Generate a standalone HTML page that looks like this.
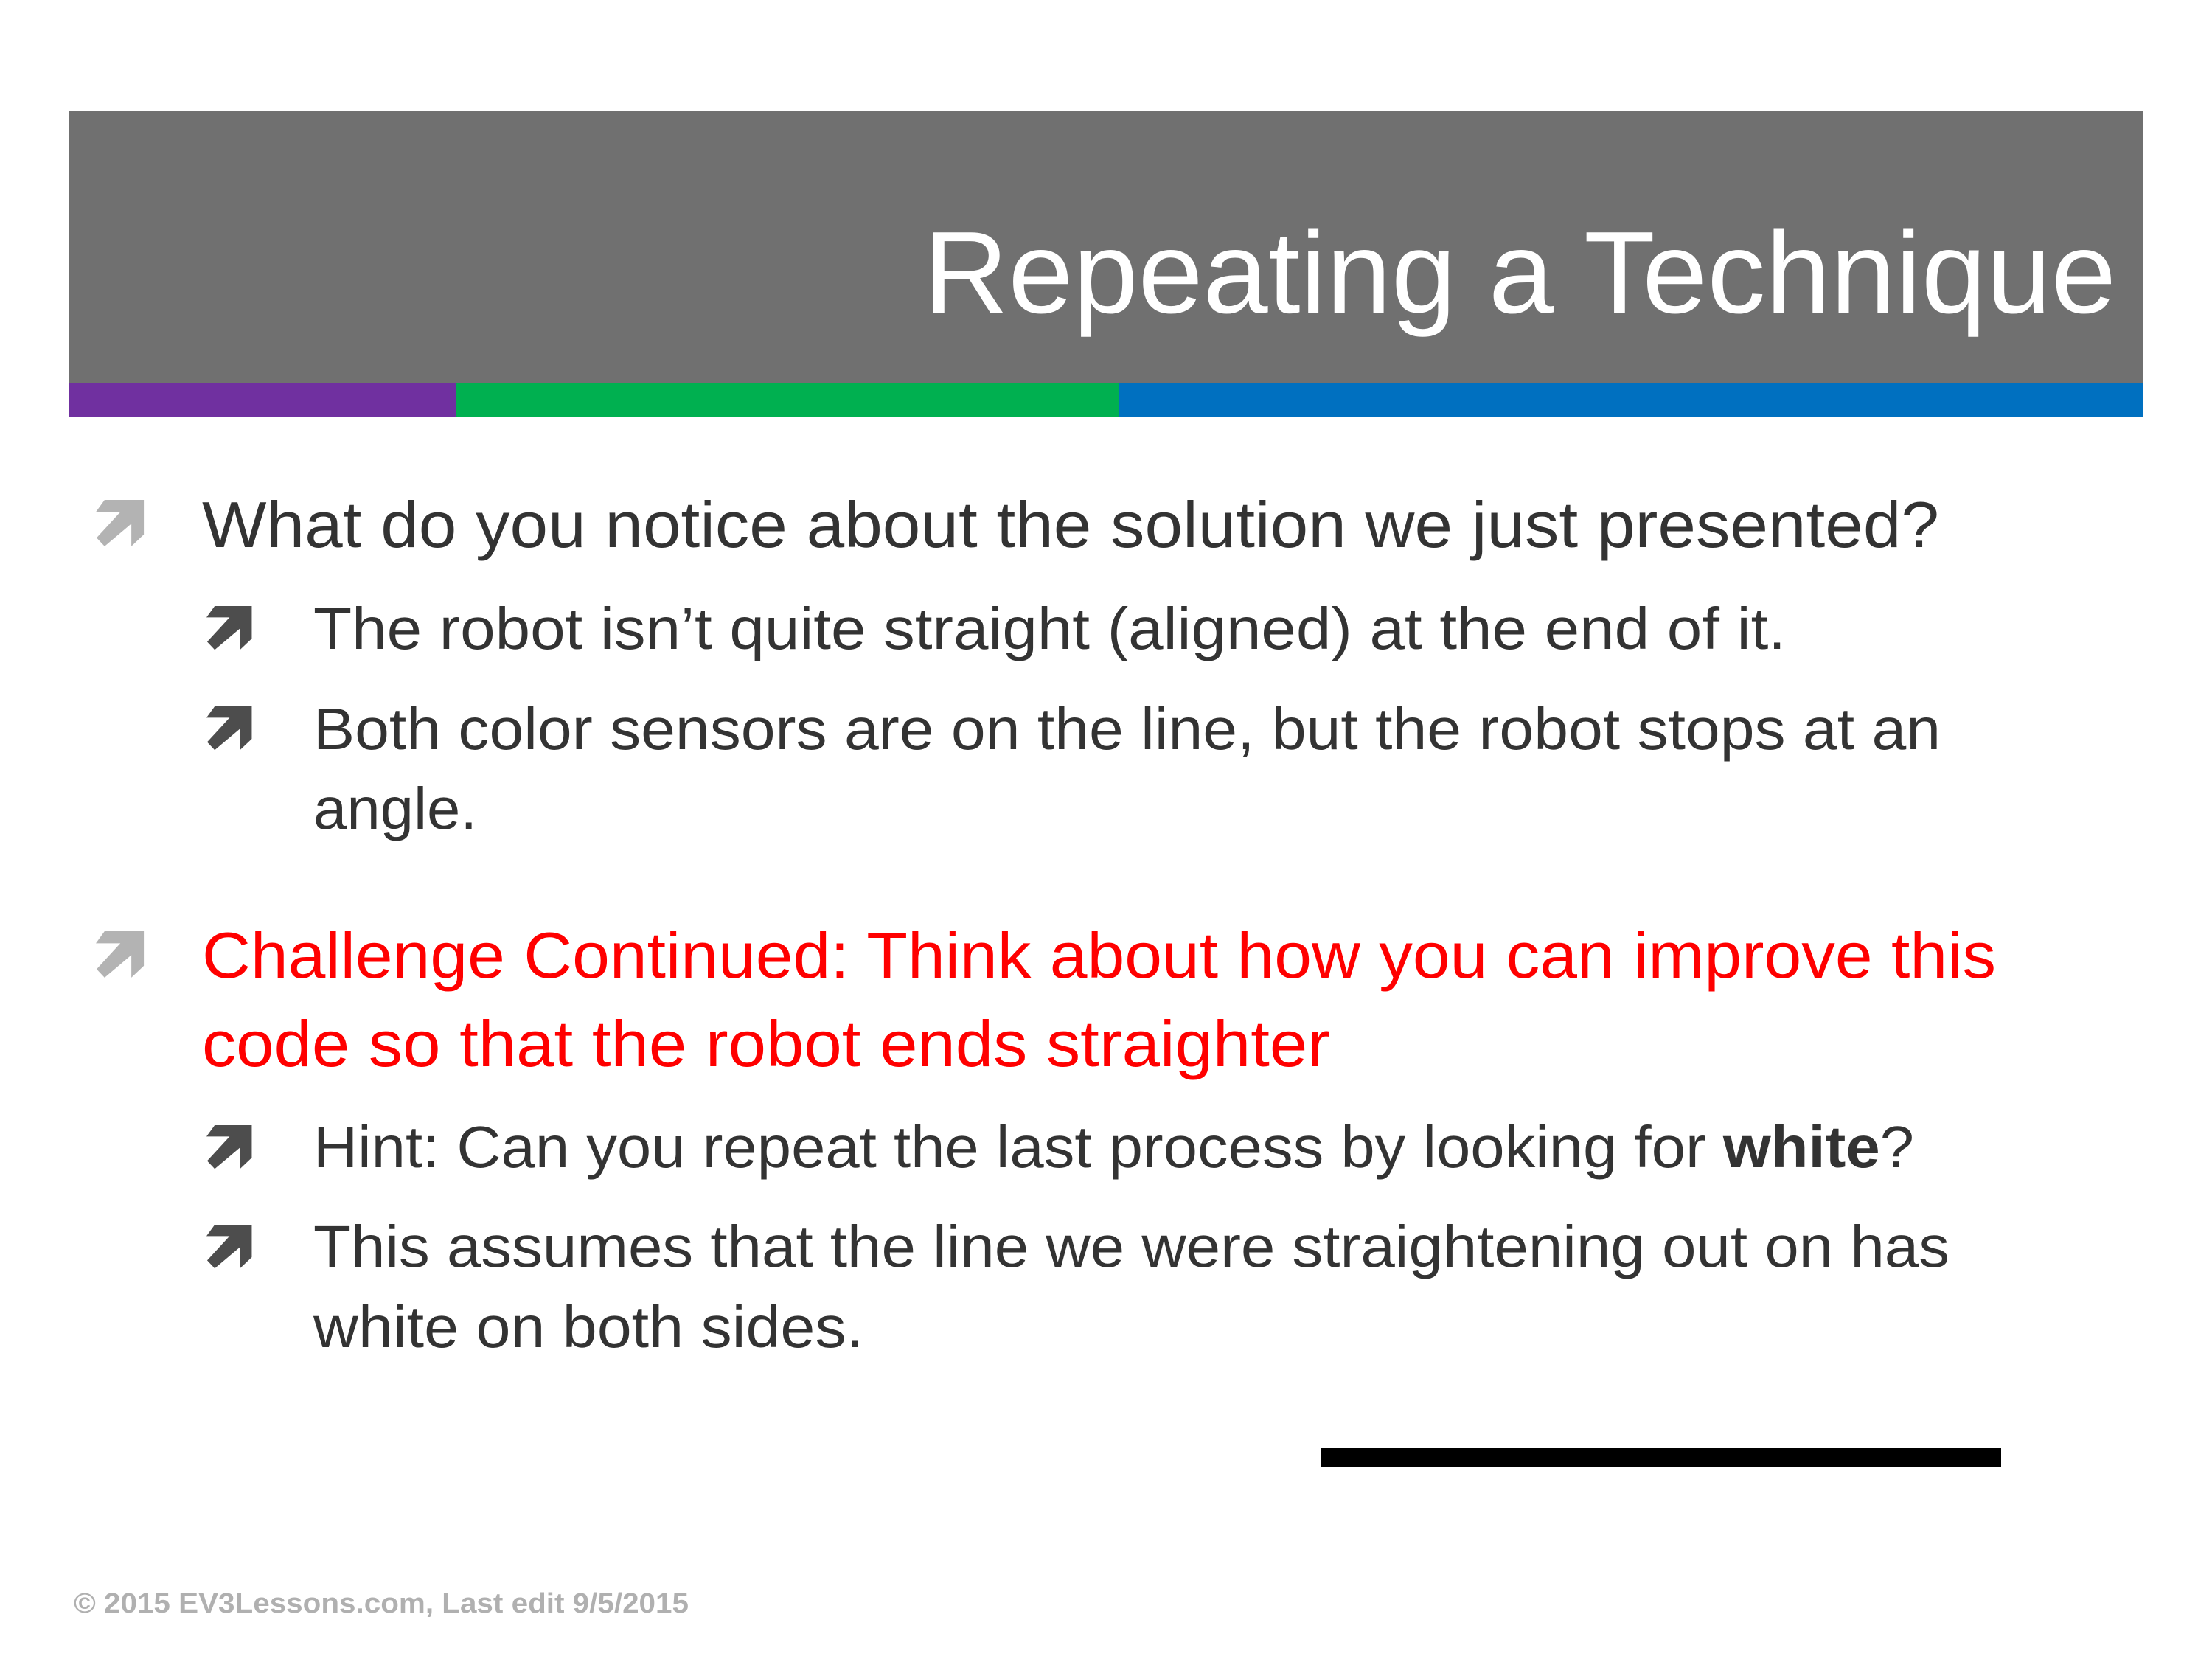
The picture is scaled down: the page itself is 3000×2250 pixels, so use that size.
<!DOCTYPE html>
<html><head><meta charset="utf-8"><style>html,body{margin:0;padding:0;background:#fff}svg{display:block}</style></head>
<body>
<svg width="3000" height="2250" viewBox="0 0 3000 2250" xmlns="http://www.w3.org/2000/svg" font-family="'Liberation Sans', sans-serif">
<defs>
<path id="arr" d="M125,117 L282,117 L282,255 L232,302 L232,212 L125,302 L93,268 L188,165 L90,165 Z"/>
</defs>
<rect x="0" y="0" width="3000" height="2250" fill="#fff"/>
<rect x="93" y="150" width="2814" height="370" fill="#707070"/>
<rect x="93" y="519" width="526" height="46" fill="#7030a0"/>
<rect x="618" y="519" width="900" height="46" fill="#00b050"/>
<rect x="1517" y="519" width="1390" height="46" fill="#0070c0"/>
<text x="1253" y="424" font-size="158" fill="#fff" textLength="1617" lengthAdjust="spacingAndGlyphs">Repeating a Technique</text>

<g fill="#b3b3b3">
<use href="#arr" transform="translate(130,678) scale(0.339,0.34) translate(-90,-117)"/>
<use href="#arr" transform="translate(130,1263) scale(0.339,0.34) translate(-90,-117)"/>
</g>
<g fill="#4d4d4d">
<use href="#arr" transform="translate(280,822) scale(0.32,0.32) translate(-90,-117)"/>
<use href="#arr" transform="translate(280,958) scale(0.32,0.32) translate(-90,-117)"/>
<use href="#arr" transform="translate(280,1526) scale(0.32,0.32) translate(-90,-117)"/>
<use href="#arr" transform="translate(280,1661) scale(0.32,0.32) translate(-90,-117)"/>
</g>

<g fill="#333">
<text x="274" y="742" font-size="88" textLength="2356" lengthAdjust="spacingAndGlyphs">What do you notice about the solution we just presented?</text>
<text x="425" y="880" font-size="80" textLength="1997" lengthAdjust="spacingAndGlyphs">The robot isn’t quite straight (aligned) at the end of it.</text>
<text x="425" y="1016" font-size="80" textLength="2207" lengthAdjust="spacingAndGlyphs">Both color sensors are on the line, but the robot stops at an</text>
<text x="425" y="1124" font-size="80" textLength="222" lengthAdjust="spacingAndGlyphs">angle.</text>
<text x="425" y="1583" font-size="80" textLength="2171" lengthAdjust="spacingAndGlyphs">Hint: Can you repeat the last process by looking for <tspan font-weight="bold">white</tspan>?</text>
<text x="425" y="1718" font-size="80" textLength="2219" lengthAdjust="spacingAndGlyphs">This assumes that the line we were straightening out on has</text>
<text x="425" y="1827" font-size="80" textLength="746" lengthAdjust="spacingAndGlyphs">white on both sides.</text>
</g>
<g fill="#ff0000">
<text x="274" y="1326" font-size="88" textLength="2433" lengthAdjust="spacingAndGlyphs">Challenge Continued: Think about how you can improve this</text>
<text x="274" y="1446" font-size="88" textLength="1530" lengthAdjust="spacingAndGlyphs">code so that the robot ends straighter</text>
</g>
<rect x="1791" y="1964" width="923" height="26" fill="#000"/>
<text x="100" y="2187" font-size="38" font-weight="bold" fill="#b0b0b0" textLength="834" lengthAdjust="spacingAndGlyphs">© 2015 EV3Lessons.com, Last edit 9/5/2015</text>
</svg>
</body></html>
